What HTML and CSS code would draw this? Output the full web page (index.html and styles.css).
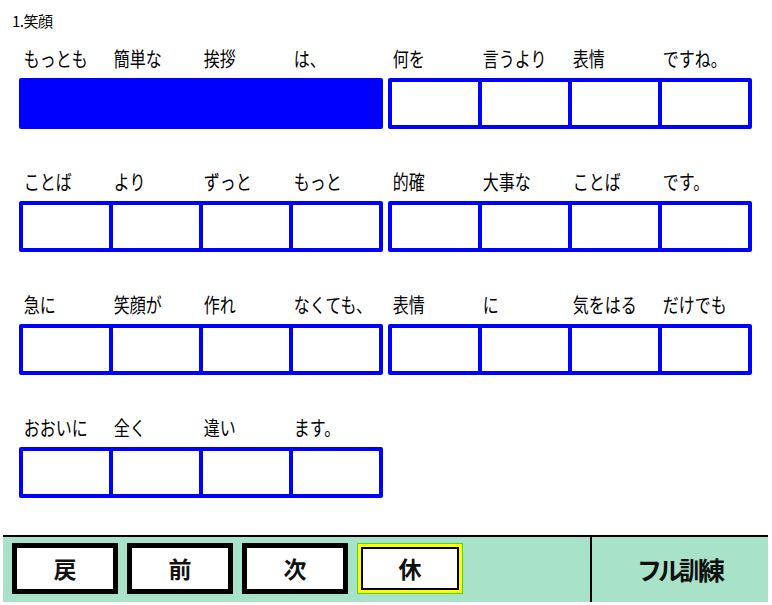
FILE: index.html
```html
<!DOCTYPE html>
<html lang="ja">
<head>
<meta charset="utf-8">
<title>1.笑顔</title>
<link rel="stylesheet" href="styles.css">
</head>
<body>
<div class="page">
  <main class="main">
    <div class="title">1.笑顔</div>
    <div class="rows">
      <div class="row">
        <div class="group">
          <div class="labels"><span>もっとも</span><span>簡単な</span><span>挨拶</span><span>は、</span></div>
          <div class="boxes filled"><div class="cell"></div><div class="cell"></div><div class="cell"></div><div class="cell"></div></div>
        </div>
        <div class="group">
          <div class="labels"><span>何を</span><span>言うより</span><span>表情</span><span>ですね。</span></div>
          <div class="boxes"><div class="cell"></div><div class="cell"></div><div class="cell"></div><div class="cell"></div></div>
        </div>
      </div>
      <div class="row">
        <div class="group">
          <div class="labels"><span>ことば</span><span>より</span><span>ずっと</span><span>もっと</span></div>
          <div class="boxes"><div class="cell"></div><div class="cell"></div><div class="cell"></div><div class="cell"></div></div>
        </div>
        <div class="group">
          <div class="labels"><span>的確</span><span>大事な</span><span>ことば</span><span>です。</span></div>
          <div class="boxes"><div class="cell"></div><div class="cell"></div><div class="cell"></div><div class="cell"></div></div>
        </div>
      </div>
      <div class="row">
        <div class="group">
          <div class="labels"><span>急に</span><span>笑顔が</span><span>作れ</span><span>なくても、</span></div>
          <div class="boxes"><div class="cell"></div><div class="cell"></div><div class="cell"></div><div class="cell"></div></div>
        </div>
        <div class="group">
          <div class="labels"><span>表情</span><span>に</span><span>気をはる</span><span>だけでも</span></div>
          <div class="boxes"><div class="cell"></div><div class="cell"></div><div class="cell"></div><div class="cell"></div></div>
        </div>
      </div>
      <div class="row">
        <div class="group">
          <div class="labels"><span>おおいに</span><span>全く</span><span>違い</span><span>ます。</span></div>
          <div class="boxes"><div class="cell"></div><div class="cell"></div><div class="cell"></div><div class="cell"></div></div>
        </div>
      </div>
    </div>
  </main>
  <footer class="footer">
    <div class="buttons">
      <button class="btn">戻</button>
      <button class="btn">前</button>
      <button class="btn">次</button>
      <button class="btn btn-rest">休</button>
    </div>
    <div class="full">フル訓練</div>
  </footer>
</div>
</body>
</html>
```
FILE: styles.css
```css
html, body {
  margin: 0;
  padding: 0;
  background: #ffffff;
}
body {
  font-family: "Noto Sans CJK JP", "Noto Sans", sans-serif;
  color: #000;
}
.page {
  width: 772px;
  height: 605px;
  display: flex;
  flex-direction: column;
}
.main {
  flex: 1;
  padding: 11px 0 0 19px;
}
.title {
  font-size: 15px;
  line-height: 20px;
  height: 20px;
  margin-left: -7px;
  letter-spacing: -0.5px;
}
.rows {
  display: flex;
  flex-direction: column;
  gap: 38px;
  margin-top: 13px;
}
.row {
  display: flex;
  gap: 5px;
}
.group {
  width: 364px;
  display: flex;
  flex-direction: column;
}
.labels {
  display: flex;
  height: 34px;
}
.labels span {
  width: 90px;
  padding-left: 6px;
  box-sizing: border-box;
  font-size: 20px;
  line-height: 30px;
  white-space: nowrap;
  transform: scaleX(0.8);
  transform-origin: left center;
}
.boxes {
  display: flex;
  border: 4px solid #0000ff;
  height: 43px;
  border-radius: 2px;
}
.cell {
  width: 86px;
}
.cell + .cell {
  border-left: 4px solid #0000ff;
}
.boxes.filled {
  background: #0000ff;
}
.footer {
  height: 65px;
  margin: 0 4px 3px 3px;
  border-top: 2px solid #000;
  background: #a8e2c8;
  display: flex;
}
.buttons {
  width: 578px;
  padding: 6px 0 0 9px;
  display: flex;
  gap: 9px;
  border-right: 2px solid #000;
  align-items: flex-start;
}
.btn {
  width: 106px;
  height: 51px;
  box-sizing: border-box;
  border: 5px solid #000;
  background: #fff;
  font-family: "Noto Sans CJK JP", sans-serif;
  font-weight: 700;
  font-size: 23px;
  line-height: 1;
  padding: 0;
  color: #111;
}
.btn-rest {
  border: 1px solid #44dd22;
  box-shadow: inset 0 0 0 3px #ffff00, inset 0 0 0 5px #000;
}
.full {
  flex: 1;
  display: flex;
  align-items: center;
  justify-content: center;
  font-weight: 700;
  font-size: 25px;
  letter-spacing: -4px;
  color: #111;
  padding: 0 2px 2px 0;
}
```
